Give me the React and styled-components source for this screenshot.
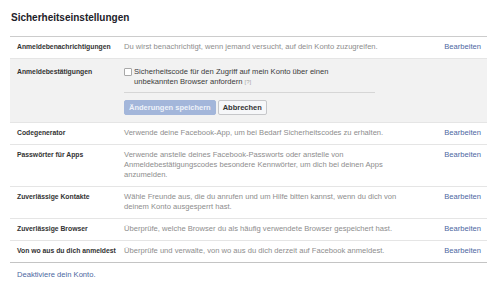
import React from "react";
import styled, { createGlobalStyle } from "styled-components";

const GlobalStyle = createGlobalStyle`
  body {
    margin: 0;
    background: #fff;
    font-family: "Liberation Sans", Arial, sans-serif;
  }
`;

const Page = styled.div`
  width: 500px;
  height: 288px;
  padding: 10px 13px 0 10px;
  box-sizing: border-box;
  overflow: hidden;
`;

const Title = styled.h1`
  margin: 0;
  padding: 2px 1px 12px;
  font-size: 10px;
  line-height: 12px;
  font-weight: bold;
  color: #1d2129;
  border-bottom: 1px solid #ccc;
`;

const List = styled.div`
  border-bottom: 1px solid #c4c4c4;
`;

const Row = styled.div`
  display: grid;
  grid-template-columns: 107px 1fr 44px;
  padding: ${pr => pr.$pad || "5px 6px 6px 7px"};
  background: ${pr => (pr.$open ? "#f2f2f2" : "#fff")};
  border-top: ${pr => (pr.$first ? "none" : "1px solid #e5e5e5")};
  font-size: 7.6px;
  line-height: 10px;
`;

const Label = styled.div`
  font-weight: bold;
  font-size: 6.8px;
  color: #333;
  white-space: nowrap;
`;

const Desc = styled.div`
  color: #8d8d8d;
  padding-right: 34px;
`;

const Edit = styled.a`
  color: #4b67a1;
  text-align: right;
  cursor: pointer;
`;

const CheckLine = styled.label`
  display: flex;
  align-items: flex-start;
  gap: 2px;
  color: #3a3a3a;
  width: 218px;
`;

const Box = styled.span`
  flex: none;
  width: 6px;
  height: 6px;
  margin-top: 1px;
  border: 1px solid #a9a9a9;
  border-radius: 1px;
  background: #fff;
`;

const Hint = styled.span`
  color: #aaa;
  font-size: 6px;
  line-height: 10px;
`;

const Divider = styled.div`
  width: 251px;
  height: 1px;
  background: #d6d6d6;
  margin: 5px 0 7px;
`;

const Buttons = styled.div`
  display: flex;
  gap: 2px;
`;

const Button = styled.button`
  font-family: inherit;
  font-size: 7.5px;
  font-weight: bold;
  height: 15px;
  padding: 0 4px;
  border: 1px solid ${pr => (pr.$primary ? "#a3b6da" : "#c6c7ca")};
  background: ${pr => (pr.$primary ? "#a3b6da" : "#f6f7f9")};
  color: ${pr => (pr.$primary ? "#eef2f9" : "#333")};
  border-radius: 2px;
`;

const Footer = styled.a`
  display: block;
  padding: 7px 7px;
  font-size: 7.6px;
  line-height: 10px;
  color: #4b67a1;
`;

const rows = [
  { label: "Codegenerator", text: "Verwende deine Facebook-App, um bei Bedarf Sicherheitscodes zu erhalten." },
  { label: "Passwörter für Apps", text: "Verwende anstelle deines Facebook-Passworts oder anstelle von Anmeldebestätigungscodes besondere Kennwörter, um dich bei deinen Apps anzumelden." },
  { label: "Zuverlässige Kontakte", text: "Wähle Freunde aus, die du anrufen und um Hilfe bitten kannst, wenn du dich von deinem Konto ausgesperrt hast." },
  { label: "Zuverlässige Browser", text: "Überprüfe, welche Browser du als häufig verwendete Browser gespeichert hast." },
  { label: "Von wo aus du dich anmeldest", text: "Überprüfe und verwalte, von wo aus du dich derzeit auf Facebook anmeldest." },
];

export default function App() {
  return (
    <Page>
      <GlobalStyle />
      <Title>Sicherheitseinstellungen</Title>
      <List>
        <Row $first>
          <Label>Anmeldebenachrichtigungen</Label>
          <Desc>Du wirst benachrichtigt, wenn jemand versucht, auf dein Konto zuzugreifen.</Desc>
          <Edit>Bearbeiten</Edit>
        </Row>
        <Row $open $pad="8px 6px 7px 7px">
          <Label>Anmeldebestätigungen</Label>
          <div>
            <CheckLine>
              <Box />
              <span>
                Sicherheitscode für den Zugriff auf mein Konto über einen unbekannten Browser anfordern <Hint>[?]</Hint>
              </span>
            </CheckLine>
            <Divider />
            <Buttons>
              <Button $primary>Änderungen speichern</Button>
              <Button>Abbrechen</Button>
            </Buttons>
          </div>
          <div />
        </Row>
        {rows.map(r => (
          <Row key={r.label}>
            <Label>{r.label}</Label>
            <Desc>{r.text}</Desc>
            <Edit>Bearbeiten</Edit>
          </Row>
        ))}
      </List>
      <Footer>Deaktiviere dein Konto.</Footer>
    </Page>
  );
}
